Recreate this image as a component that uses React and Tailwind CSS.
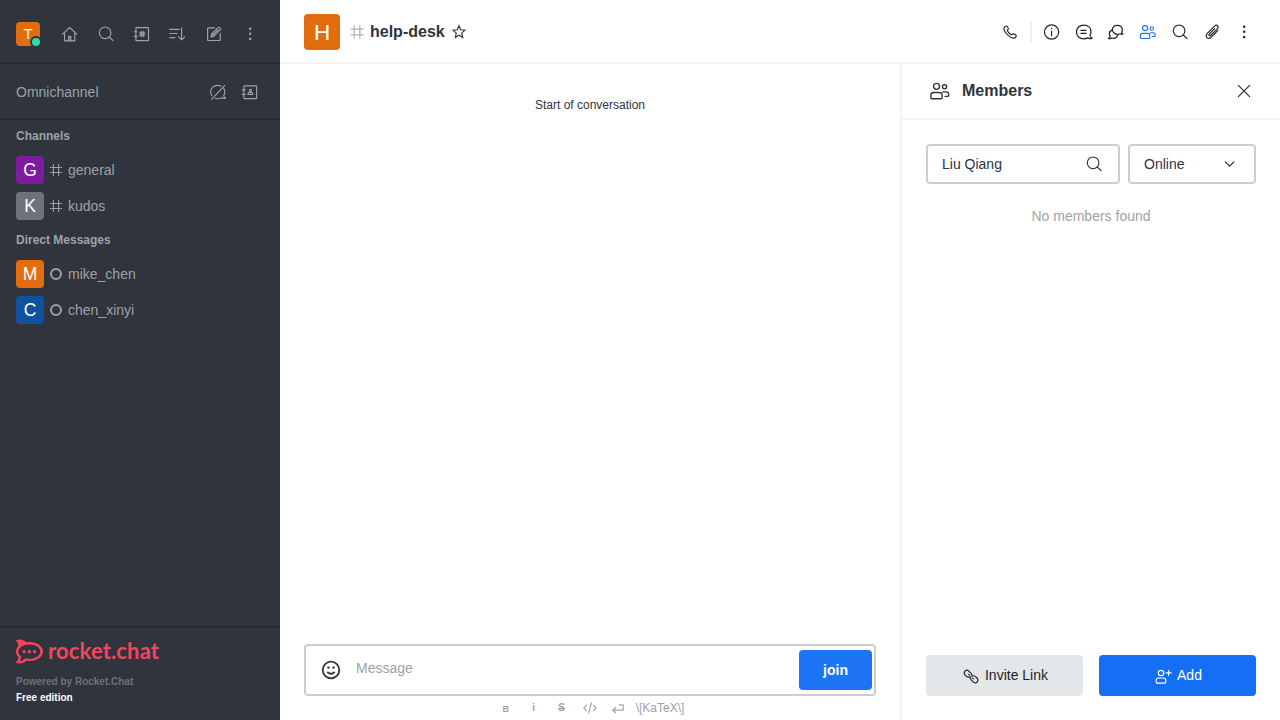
import React from "react";
import { SiRocketdotchat } from "react-icons/si";

function Icon({ children, className = "", sw = 1.15, size = 20 }) {
  return (
    <svg
      viewBox="0 0 20 20"
      width={size}
      height={size}
      className={"shrink-0 " + className}
      fill="none"
      stroke="currentColor"
      strokeWidth={sw}
      strokeLinecap="round"
      strokeLinejoin="round"
    >
      {children}
    </svg>
  );
}

function Avatar({ letter, color, size }) {
  return (
    <svg viewBox="0 0 200 200" width={size} height={size} className="block shrink-0 rounded">
      <rect width="200" height="200" fill={color} />
      <text
        x="100"
        y="100"
        dy="0.36em"
        textAnchor="middle"
        fill="#fff"
        fontSize="125"
        fontFamily="'Liberation Sans', Arial, sans-serif"
      >
        {letter}
      </text>
    </svg>
  );
}

const Home = () => (
  <Icon>
    <path d="M2.6 10.2 9.6 3.5l7.1 6.7M4.6 9v7.8h10.2V9" />
    <path d="M8.6 16.5v-4.1h2.2v4.1z" fill="currentColor" fillOpacity="0.5" />
  </Icon>
);
const Search = ({ className }) => (
  <Icon className={className}>
    <circle cx="9.1" cy="8.8" r="5.8" />
    <path d="m13.3 13 3.8 3.7" />
  </Icon>
);
const Directory = () => (
  <Icon>
    <rect x="3.9" y="3.6" width="12.6" height="13" rx="0.3" />
    <path d="M2.3 7.7h2.8M2.3 12.4h2.8" />
    <path d="M9.300 7.500l-.2 5M11.500 7.500l-.2 5M7.700 8.900h5.200M7.600 11.100h5.200" strokeWidth="1.300" />
  </Icon>
);
const Sort = () => (
  <Icon>
    <path d="M1.700 5.400H11M1.700 9.500h7.300M1.700 13.600H7M13.600 3.700v12M10.500 12.800l3.100 3.100 3.100-3.100" />
  </Icon>
);
const Compose = () => (
  <Icon>
    <path d="M10.600 3.900H4.200a.6.6 0 0 0-.6.6v11.400c0 .4.2.6.6.6h11.400c.4 0 .6-.2.6-.6V9.400" />
    <path d="m7.100 12.900.6-3 6.500-6.300c.4-.4 1-.4 1.400 0l.7.700c.4.4.4 1 0 1.400l-6.400 6.400zM7.700 9.900l2.200 2.200M9 10.900l5-4.900" />
  </Icon>
);
const Kebab = () => (
  <Icon>
    <g fill="currentColor" stroke="none">
      <circle cx="10.200" cy="4.700" r="1.250" />
      <circle cx="10.200" cy="9.800" r="1.250" />
      <circle cx="10.200" cy="14.900" r="1.250" />
    </g>
  </Icon>
);
const LivechatOff = () => (
  <Icon>
    <path d="M13.200 4.300C12.200 3.700 11 3.300 9.800 3.300c-4.200 0-7.100 2.700-7.100 6.700 0 1.400.4 2.700 1.100 3.700M15.700 6.400c.7 1 1.100 2.200 1.100 3.600 0 1.400-.4 2.500-1.100 3.600.1 1.200.8 2 1.900 2.500-1.200.5-2.700.5-4-.3-1.900 1-4.400 1.200-6.300.4M3.600 17.300 16.800 3.400" />
  </Icon>
);
const Contacts = () => (
  <Icon>
    <rect x="3.900" y="3.800" width="12.700" height="12.800" rx="0.300" />
    <path d="M2.300 7.800h2.800M2.300 12.400h2.800" />
    <circle cx="10.400" cy="8.500" r="1.100" />
    <path d="M8 12.500v-.7c0-.8.5-1.200 1.200-1.200h2.400c.7 0 1.200.4 1.200 1.200v.7z" />
  </Icon>
);
const Hash = ({ size, sw = 1.350, className }) => (
  <Icon size={size} className={className} sw={sw}>
    <path d="M6.800 3v14M13.200 3v14M3 6.800h14M3 13.200h14" />
  </Icon>
);
const Star = () => (
  <Icon>
    <path
      d="m10 3.800 1.700 4 4.200.4-3.200 2.900 1 4.500-3.700-2.300-3.700 2.300 1-4.500-3.200-2.900 4.200-.4z"
      strokeLinejoin="miter"
    />
  </Icon>
);
const Phone = () => (
  <Icon>
    <path d="M4.200 5.400c.6-.9 1.400-1.600 2.200-1.400.9.300 1.700 1.800 1.900 2.700.1.800-.9 1.200-.9 1.900 0 .9 3.100 4.100 4.100 4.100.8 0 1.200-.9 2-.8.9.1 2.400 1 2.700 1.900.2.800-.5 1.700-1.400 2.100-1.600.7-4.700-.8-7.100-3.100C5.200 10.400 3.400 7 4.200 5.400z" />
  </Icon>
);
const Info = () => (
  <Icon>
    <circle cx="9.600" cy="10" r="7.100" />
    <path d="M9.600 9v4.800" />
    <circle cx="9.600" cy="6.500" r="0.800" fill="currentColor" stroke="none" />
  </Icon>
);
const Thread = () => (
  <Icon sw={1.250}>
    <path d="M15.900 13.500c.2 1.200.9 2 2.200 2.600-1.400.7-3 .6-4.300-.2-1.200.6-2.600.9-4 .9-4.200 0-7.300-2.700-7.300-6.800s3.100-6.800 7.300-6.800S17 5.900 17 10c0 1.300-.4 2.500-1.100 3.500zM7 8.400h5M7 11.400h5" />
  </Icon>
);
const Discussion = () => (
  <Icon sw={1.250}>
    <path d="M15.700 10.300c.1.700.5 1.200 1.200 1.600-.9.400-1.900.3-2.800-.2-3.700 1.600-7.700-.4-7.700-3.900 0-2.700 2.100-4.500 4.900-4.500s5 1.900 5 4.600c0 .9-.2 1.700-.6 2.400z" />
    <path d="M6 8.200c-1.600.6-2.600 1.900-2.600 3.600 0 .9.300 1.700.8 2.300-.1 1.100-.7 1.900-1.700 2.400 1.200.4 2.400.2 3.400-.5 2.500.8 5.200-.3 5.900-2.800" />
  </Icon>
);
const Members = ({ size = 20 }) => (
  <Icon size={size}>
    <circle cx="7.100" cy="6.100" r="2.500" />
    <circle cx="13.800" cy="6.500" r="1.750" />
    <path d="M2.400 15.700v-2.100c0-1.400.9-2.300 2.300-2.300h4.800c1.400 0 2.300.9 2.300 2.300v2.100c0 .5-.3.800-.8.800H3.200c-.5 0-.8-.3-.8-.8zM12.200 10.700h2.700c1.400 0 2.300.8 2.300 2.200v.8c0 .5-.3.800-.8.800h-2.200" />
  </Icon>
);
const Clip = () => (
  <Icon sw={1.150}>
    <path d="m12.700 6.600-5.500 5.500c-.5.500-.5 1 0 1.400s1 .4 1.400 0l6.700-6.700c1-1 1.100-2.200.3-3s-2-.7-3 .3l-7.100 7.100c-1.500 1.500-1.700 3.300-.6 4.400s2.900 1 4.400-.5l6.400-6.400" />
  </Icon>
);
const Close = () => (
  <Icon sw={1.300}>
    <path d="M4.400 4.400 15.600 15.600M15.600 4.400 4.400 15.600" />
  </Icon>
);
const Chevron = () => (
  <Icon sw={1.200}>
    <path d="m5.400 8 4.200 4.200 4.200-4.200" />
  </Icon>
);
const Emoji = () => (
  <Icon size={24} sw={1.500}>
    <circle cx="10" cy="10" r="6.900" />
    <path d="M7.300 12c1.400 1.500 4 1.500 5.400 0" />
    <circle cx="7.900" cy="8" r="1" fill="currentColor" stroke="none" />
    <circle cx="12.100" cy="8" r="1" fill="currentColor" stroke="none" />
  </Icon>
);
const LinkIcon = () => (
  <Icon>
    <path d="M8.600 10.900c-1.200.5-2.400.2-3.400-.8l-1-1c-1.200-1.200-1.300-2.900-.2-4s2.800-1 4 .2l2 2c.9.900 1.200 1.900.9 2.900" />
    <path d="M11.400 10c1.200-.5 2.400-.2 3.400.8l1.200 1.200c1.200 1.200 1.300 2.900.2 4s-2.800 1-4-.2l-2-2c-.9-.9-1.200-1.900-.9-2.900M7.600 8.400l.9.700M11.400 12.200l1 .6" />
  </Icon>
);
const AddUser = () => (
  <Icon>
    <circle cx="8" cy="7" r="2.700" />
    <path d="M3.200 16.300v-2c0-1.400.9-2.300 2.300-2.300h5c1.400 0 2.300.9 2.300 2.300v2c0 .5-.3.800-.8.800H4c-.5 0-.8-.3-.8-.8zM15.600 4.200v5.200M13 6.800h5.200" />
  </Icon>
);

function Row({ letter, color, name, hash }) {
  return (
    <div className="flex h-9 items-center px-4 text-sm text-[#9ea2a8]">
      <Avatar letter={letter} color={color} size={28} />
      <div className="ml-1 flex w-4 justify-center">
        {hash ? (
          <Hash size={16} />
        ) : (
          <span className="h-3 w-3 rounded-full border-2 border-[#9ea2a8]" />
        )}
      </div>
      <span className="ml-1">{name}</span>
    </div>
  );
}

function Sidebar() {
  return (
    <aside className="flex w-[280px] shrink-0 flex-col bg-[#2f343d] text-[#9ea2a8]">
      <div className="flex h-16 items-center border-b-2 border-[#262a31] pt-[6px] pl-4">
        <div className="relative">
          <Avatar letter="T" color="#e26d0e" size={24} />
          <span className="absolute -right-[2px] -bottom-[2px] h-3 w-3 rounded-full border-2 border-[#2f343d] bg-[#2de0a5]" />
        </div>
        <div className="ml-5 flex gap-4">
          <Home />
          <Search />
          <Directory />
          <Sort />
          <Compose />
          <Kebab />
        </div>
      </div>
      <div className="flex h-14 items-center border-b-2 border-[#262a31] pt-[2px] pr-5 pl-4">
        <span className="grow text-sm">Omnichannel</span>
        <div className="flex gap-3">
          <LivechatOff />
          <Contacts />
        </div>
      </div>
      <div className="grow">
        <h3 className="flex h-8 items-center px-4 text-xs font-bold">Channels</h3>
        <Row letter="G" color="#7f1b9f" name="general" hash />
        <Row letter="K" color="#6c727a" name="kudos" hash />
        <h3 className="flex h-8 items-center px-4 text-xs font-bold">Direct Messages</h3>
        <Row letter="M" color="#e26d0e" name="mike_chen" />
        <Row letter="C" color="#10529e" name="chen_xinyi" />
      </div>
      <div className="h-[94px] border-t-2 border-[#262a31] px-4 pt-[9px]">
        <div className="flex h-7 items-center text-[#f5455c]">
          <SiRocketdotchat size={27} />
          <svg width="120" height="30" className="ml-[5px] shrink-0 overflow-visible">
            <text
              x="0"
              y="22.5"
              fontSize="22"
              fontWeight="700"
              fontFamily="Lato, sans-serif"
              textLength="111"
              fill="currentColor"
            >
              rocket.chat
            </text>
          </svg>
        </div>
        <p className="mt-[9px] text-[10px] leading-4 font-bold text-[#6c727a]">Powered by Rocket.Chat</p>
        <p className="text-[10px] leading-4 font-bold text-white">Free edition</p>
      </div>
    </aside>
  );
}

function Composer() {
  return (
    <div className="px-6">
      <div className="flex h-[52px] items-center rounded border-2 border-[#cbced1] pr-[2px] pl-[13px]">
        <Emoji />
        <span className="ml-[13px] grow pb-[4px] text-sm text-[#9ea2a8]">Message</span>
        <button className="h-10 w-[73px] rounded bg-[#1d74f5] text-sm font-bold text-white">join</button>
      </div>
      <div className="flex h-6 items-center justify-center pr-1 text-[#9ea2a8]">
        <span className="w-7 pt-[2px] text-center text-[9px] leading-3 font-bold">B</span>
        <span className="w-7 text-center text-[10px] leading-3 font-bold">i</span>
        <span className="w-7 text-center text-[10px] leading-3 font-bold">
          <s className="px-px">S</s>
        </span>
        <span className="flex w-7 justify-center">
          <Icon size={16} sw={1.400}>
            <path d="M5.600 6.500 2.400 10l3.200 3.500M14.400 6.500l3.200 3.500-3.200 3.500M11.800 3.500 8.200 16.500" />
          </Icon>
        </span>
        <span className="flex w-7 justify-center">
          <Icon size={16} sw={1.500}>
            <path d="M11.500 6h5v6.600H3.600M7 9.300l-3.500 3.300L7 16" />
          </Icon>
        </span>
        <span className="ml-1 text-xs">\[KaTeX\]</span>
      </div>
    </div>
  );
}

export default function App() {
  return (
    <div className="flex h-[720px] w-[1280px] overflow-hidden bg-white font-['Liberation_Sans',Arial,sans-serif] text-[#2f343d]">
      <Sidebar />
      <div className="flex grow flex-col">
        <header className="flex h-16 shrink-0 items-center border-b-2 border-[#f2f3f5] px-6 pt-[2px]">
          <Avatar letter="H" color="#e26d0e" size={36} />
          <Hash size={18} sw={1.100} className="ml-2 text-[#9ea2a8]" />
          <h1 className="ml-1 text-base font-bold">help-desk</h1>
          <div className="ml-1 flex grow">
            <Star />
          </div>
          <div className="flex items-center gap-[10px] pr-[2px] text-[#1f2329]">
            <Phone />
            <span className="h-5 w-[2px] bg-[#eeeff1]" />
            <div className="flex gap-3">
              <Info />
              <Thread />
              <Discussion />
              <span className="text-[#1d74f5]">
                <Members />
              </span>
              <Search />
              <Clip />
              <Kebab />
            </div>
          </div>
        </header>
        <div className="flex grow">
          <main className="flex w-[620px] flex-col">
            <p className="grow pt-8 text-center text-xs leading-[18px]">Start of conversation</p>
            <Composer />
          </main>
          <aside className="flex w-[380px] flex-col border-l-2 border-[#f2f3f5]">
            <div className="flex h-14 items-center border-b-2 border-[#f2f3f5] px-[26px]">
              <Members size={24} />
              <h2 className="ml-[10px] grow text-base font-bold">Members</h2>
              <Close />
            </div>
            <div className="flex gap-2 px-6 pt-6 text-sm">
              <div className="flex h-10 w-[194px] items-center justify-between rounded border-2 border-[#cbced1] px-[14px]">
                <span>Liu Qiang</span>
                <Search />
              </div>
              <div className="flex h-10 w-32 items-center justify-between rounded border-2 border-[#cbced1] px-[14px]">
                <span>Online</span>
                <Chevron />
              </div>
            </div>
            <p className="grow pt-[22px] text-center text-sm text-[#9ea2a8]">No members found</p>
            <div className="flex gap-4 px-6 pb-6 text-sm">
              <button className="flex h-[41px] w-[157px] items-center justify-center gap-1 rounded bg-[#e4e7ea] text-[#1f2329]">
                <LinkIcon />
                <span className="pb-[2px]">Invite Link</span>
              </button>
              <button className="flex h-[41px] w-[157px] items-center justify-center gap-1 rounded bg-[#156ff5] text-white">
                <AddUser />
                <span className="pb-[2px]">Add</span>
              </button>
            </div>
          </aside>
        </div>
      </div>
    </div>
  );
}
